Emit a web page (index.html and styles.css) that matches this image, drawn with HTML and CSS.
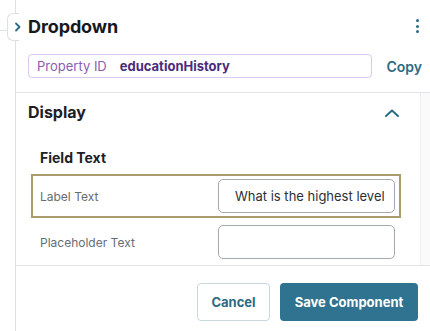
FILE: index.html
```html
<!DOCTYPE html>
<html>
<head>
<meta charset="utf-8">
<link rel="stylesheet" href="styles.css">
</head>
<body>
<div class="shell">
  <div class="panel">
    <div class="tab">
      <svg width="8" height="10" viewBox="0 0 8 10"><path d="M2 1.5 L5.5 5 L2 8.5" fill="none" stroke="#2b6c83" stroke-width="1.8" stroke-linecap="round" stroke-linejoin="round"/></svg>
    </div>
    <div class="header">
      <h1 class="title">Dropdown</h1>
      <span class="kebab"><i></i><i></i><i></i></span>
    </div>
    <div class="prop-row">
      <div class="prop-box"><span class="prop-label">Property ID</span><span class="prop-value">educationHistory</span></div>
      <span class="copy">Copy</span>
    </div>
    <div class="body">
      <div class="scroll">
        <div class="section-head">
          <span class="section-title">Display</span>
          <svg class="chev-up" width="16" height="10" viewBox="0 0 16 10"><path d="M2 8 L8 2.5 L14 8" fill="none" stroke="#2b6c83" stroke-width="2" stroke-linecap="round" stroke-linejoin="round"/></svg>
        </div>
        <div class="group-title">Field Text</div>
        <div class="field active">
          <span class="field-label">Label Text</span>
          <div class="input"><span>What is the highest level of education</span></div>
        </div>
        <div class="field">
          <span class="field-label">Placeholder Text</span>
          <div class="input"></div>
        </div>
      </div>
      <div class="track"></div>
    </div>
    <div class="footer">
      <button class="btn cancel">Cancel</button>
      <button class="btn save">Save Component</button>
    </div>
  </div>
</div>
</body>
</html>
```
FILE: styles.css
```css
* { box-sizing: border-box; }
html, body { margin: 0; padding: 0; background: #fff; }
body { font-family: Inter, "Noto Sans", sans-serif; color: #1d2127; width: 430px; height: 331px; overflow: hidden; }

.shell { padding-left: 15px; height: 331px; position: relative; }
.shell::before { content: ""; position: absolute; left: 0; top: 30px; width: 8px; height: 1px; background: #dcdfe3; }

.panel { position: relative; height: 331px; border-left: 1px solid #dcdfe3; display: flex; flex-direction: column; }

.tab { position: absolute; left: -9px; top: 13px; width: 12px; height: 28px; background: #fff; border: 1px solid #dcdfe3; border-right: none; border-radius: 6px 0 0 6px; display: flex; align-items: center; justify-content: flex-end; padding-right: 0; }
.tab svg { margin-right: -3px; }

.header { height: 52px; display: flex; align-items: center; justify-content: space-between; padding: 0 11px 0 12px; }
.title { margin: 0; font-size: 18px; font-weight: 700; letter-spacing: -0.1px; color: #16191d; }
.kebab { display: flex; flex-direction: column; gap: 2.5px; width: 3px; }
.kebab i { display: block; width: 3px; height: 3px; border-radius: 50%; background: #2b6c83; }

.prop-row { display: flex; align-items: center; padding: 2px 8px 14px 12px; border-bottom: 1px solid #e1e3e6; }
.prop-box { width: 349px; height: 24px; border: 1px solid #dcc8ea; border-radius: 4px; display: flex; align-items: center; padding-left: 8px; font-size: 13px; }
.prop-label { color: #8b5cb5; margin-right: 13px; }
.prop-value { color: #4b2b7b; font-weight: 700; }
.copy { margin-left: 14px; font-size: 14px; font-weight: 600; color: #2b6c83; }

.body { display: flex; height: 173px; border-bottom: 1px solid #e1e3e6; }
.scroll { width: 404px; overflow: hidden; }
.track { width: 10px; border-left: 1px solid #eceef0; background: #fafafa; }

.section-head { height: 36px; display: flex; align-items: center; justify-content: space-between; padding: 2px 20px 0 12px; }
.section-title { font-size: 16px; font-weight: 700; color: #1d2127; }
.chev-up { margin-top: 2px; }

.group-title { margin: 19px 0 0 24px; font-size: 14px; font-weight: 700; color: #1d2127; height: 20px; line-height: 20px; }

.field { margin: 6px 19px 0 15px; height: 44px; border: 2px solid transparent; display: flex; align-items: center; justify-content: space-between; padding: 0 4px 0 7px; }
.field.active { border-color: #aa9c6c; margin-top: 6px; }
.field + .field { margin-top: 2px; }
.field-label { font-size: 12px; color: #676c73; }
.input { width: 177px; height: 34px; border: 1px solid #a4a9b0; border-radius: 5px; padding: 0 6px 0 16px; display: flex; align-items: center; overflow: hidden; white-space: nowrap; font-size: 13px; color: #2d3136; }
.input span { display: block; overflow: hidden; }

.footer { display: flex; justify-content: flex-end; gap: 10px; padding: 17px 12px 0 0; }
.btn { height: 38px; border-radius: 4px; font-family: Inter, "Noto Sans", sans-serif; font-size: 13px; font-weight: 700; cursor: pointer; }
.cancel { width: 73px; background: #fff; border: 1px solid #c9d7df; color: #2b6c83; }
.save { width: 138px; background: #2f7390; border: none; color: #fff; }
```
